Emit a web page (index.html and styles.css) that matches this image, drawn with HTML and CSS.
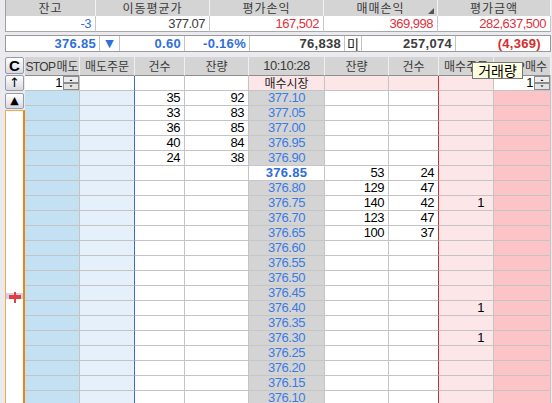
FILE: index.html
```html
<!DOCTYPE html>
<html lang="ko">
<head>
<meta charset="utf-8">
<link rel="stylesheet" href="styles.css">
</head>
<body>
<div class="app">
  <div class="summary">
    <div class="sh">잔고</div>
    <div class="sh">이동평균가</div>
    <div class="sh">평가손익</div>
    <div class="sh sort">매매손익</div>
    <div class="sh">평가금액</div>
    <div class="sv blue">-3</div>
    <div class="sv dark">377.07</div>
    <div class="sv red">167,502</div>
    <div class="sv red">369,998</div>
    <div class="sv red">282,637,500</div>
  </div>

  <div class="quote">
    <div class="q blue">376.85</div>
    <div class="q ctr blue tri">▼</div>
    <div class="q blue">0.60</div>
    <div class="q blue">-0.16%</div>
    <div class="q dark">76,838</div>
    <div class="q ctr kr">미</div>
    <div class="q dark">257,074</div>
    <div class="q red last">(4,369)</div>
  </div>

  <div class="board">
    <div class="side">
      <div class="btn btn-c">C</div>
      <div class="btn btn-up">↑</div>
      <div class="btn btn-tri">▲</div>
      <div class="track"><div class="mark"></div></div>
    </div>

    <div class="grid">
      <div class="r h">
        <span><span class="lat">STOP</span>매도</span><span>매도주문</span><span>건수</span><span>잔량</span><span class="time">10:10:28</span><span>잔량</span><span>건수</span><span>매수주문</span><span class="sbh"><span class="lat">STOP</span>매수</span>
      </div>
      <div class="r">
        <span class="w spin">1<svg class="spn" width="16" height="14" viewBox="0 0 16 14"><rect x="0.5" y="0.5" width="15" height="6" fill="#ececec" stroke="#8c8c8c"/><rect x="0.5" y="7.5" width="15" height="6" fill="#e2e2e2" stroke="#8c8c8c"/><path d="M6.5 5 L8 3.5 L9.5 5Z" fill="#000"/><path d="M6.5 9.5 L8 11 L9.5 9.5Z" fill="#000"/></svg></span><span class="w so-l"></span><span class="w"></span><span class="w"></span><span class="mk">매수시장</span><span class="pk"></span><span class="pk bc"></span><span class="pk"></span><span class="w spin">1<svg class="spn" width="16" height="14" viewBox="0 0 16 14"><rect x="0.5" y="0.5" width="15" height="6" fill="#ececec" stroke="#8c8c8c"/><rect x="0.5" y="7.5" width="15" height="6" fill="#e2e2e2" stroke="#8c8c8c"/><path d="M6.5 5 L8 3.5 L9.5 5Z" fill="#000"/><path d="M6.5 9.5 L8 11 L9.5 9.5Z" fill="#000"/></svg></span>
      </div>
      <div class="r"><span class="ss"></span><span class="so"></span><span class="w">35</span><span class="w">92</span><span class="p">377.10</span><span class="w"></span><span class="w bc"></span><span class="bo"></span><span class="sb"></span></div>
      <div class="r"><span class="ss"></span><span class="so"></span><span class="w">33</span><span class="w">83</span><span class="p">377.05</span><span class="w"></span><span class="w bc"></span><span class="bo"></span><span class="sb"></span></div>
      <div class="r"><span class="ss"></span><span class="so"></span><span class="w">36</span><span class="w">85</span><span class="p">377.00</span><span class="w"></span><span class="w bc"></span><span class="bo"></span><span class="sb"></span></div>
      <div class="r"><span class="ss"></span><span class="so"></span><span class="w">40</span><span class="w">84</span><span class="p">376.95</span><span class="w"></span><span class="w bc"></span><span class="bo"></span><span class="sb"></span></div>
      <div class="r"><span class="ss"></span><span class="so"></span><span class="w">24</span><span class="w">38</span><span class="p">376.90</span><span class="w"></span><span class="w bc"></span><span class="bo"></span><span class="sb"></span></div>
      <div class="r"><span class="ss"></span><span class="so"></span><span class="w"></span><span class="w"></span><span class="p cur">376.85</span><span class="w">53</span><span class="w bc">24</span><span class="bo"></span><span class="sb"></span></div>
      <div class="r"><span class="ss"></span><span class="so"></span><span class="w"></span><span class="w"></span><span class="p">376.80</span><span class="w">129</span><span class="w bc">47</span><span class="bo"></span><span class="sb"></span></div>
      <div class="r"><span class="ss"></span><span class="so"></span><span class="w"></span><span class="w"></span><span class="p">376.75</span><span class="w">140</span><span class="w bc">42</span><span class="bo">1</span><span class="sb"></span></div>
      <div class="r"><span class="ss"></span><span class="so"></span><span class="w"></span><span class="w"></span><span class="p">376.70</span><span class="w">123</span><span class="w bc">47</span><span class="bo"></span><span class="sb"></span></div>
      <div class="r"><span class="ss"></span><span class="so"></span><span class="w"></span><span class="w"></span><span class="p">376.65</span><span class="w">100</span><span class="w bc">37</span><span class="bo"></span><span class="sb"></span></div>
      <div class="r"><span class="ss"></span><span class="so"></span><span class="w"></span><span class="w"></span><span class="p">376.60</span><span class="w"></span><span class="w bc"></span><span class="bo"></span><span class="sb"></span></div>
      <div class="r"><span class="ss"></span><span class="so"></span><span class="w"></span><span class="w"></span><span class="p">376.55</span><span class="w"></span><span class="w bc"></span><span class="bo"></span><span class="sb"></span></div>
      <div class="r"><span class="ss"></span><span class="so"></span><span class="w"></span><span class="w"></span><span class="p">376.50</span><span class="w"></span><span class="w bc"></span><span class="bo"></span><span class="sb"></span></div>
      <div class="r"><span class="ss"></span><span class="so"></span><span class="w"></span><span class="w"></span><span class="p">376.45</span><span class="w"></span><span class="w bc"></span><span class="bo"></span><span class="sb"></span></div>
      <div class="r"><span class="ss"></span><span class="so"></span><span class="w"></span><span class="w"></span><span class="p">376.40</span><span class="w"></span><span class="w bc"></span><span class="bo">1</span><span class="sb"></span></div>
      <div class="r"><span class="ss"></span><span class="so"></span><span class="w"></span><span class="w"></span><span class="p">376.35</span><span class="w"></span><span class="w bc"></span><span class="bo"></span><span class="sb"></span></div>
      <div class="r"><span class="ss"></span><span class="so"></span><span class="w"></span><span class="w"></span><span class="p">376.30</span><span class="w"></span><span class="w bc"></span><span class="bo">1</span><span class="sb"></span></div>
      <div class="r"><span class="ss"></span><span class="so"></span><span class="w"></span><span class="w"></span><span class="p">376.25</span><span class="w"></span><span class="w bc"></span><span class="bo"></span><span class="sb"></span></div>
      <div class="r"><span class="ss"></span><span class="so"></span><span class="w"></span><span class="w"></span><span class="p">376.20</span><span class="w"></span><span class="w bc"></span><span class="bo"></span><span class="sb"></span></div>
      <div class="r"><span class="ss"></span><span class="so"></span><span class="w"></span><span class="w"></span><span class="p">376.15</span><span class="w"></span><span class="w bc"></span><span class="bo"></span><span class="sb"></span></div>
      <div class="r"><span class="ss"></span><span class="so"></span><span class="w"></span><span class="w"></span><span class="p">376.10</span><span class="w"></span><span class="w bc"></span><span class="bo"></span><span class="sb"></span></div>
    </div>
  </div>

  <div class="tooltip">거래량</div>
</div>
</body>
</html>
```

FILE: styles.css
```css
* { box-sizing: border-box; }
html, body { margin: 0; padding: 0; }
body {
  width: 552px;
  height: 403px;
  overflow: hidden;
  background: #ebebef;
  font-family: "Liberation Sans", "Noto Sans CJK KR", sans-serif;
  font-size: 13px;
  letter-spacing: -0.5px;
  color: #000;
}
.app {
  position: relative;
  width: 552px;
  height: 403px;
  padding-left: 5px;
}

/* summary table */
.summary {
  display: grid;
  grid-template-columns: 91px 114px 114px 114px 113px;
  width: 546px;
}
.sh {
  height: 16px;
  background: #d4d4d4;
  border-right: 1px solid #f2f2f2;
  color: #3a3a3a;
  text-align: center;
  line-height: 16px;
  font-family: "Noto Sans CJK KR", sans-serif;
  font-size: 12px;
  letter-spacing: 1px;
}
.sh:first-child { border-left: 1px solid #a0a0a0; }
.sort { position: relative; }
.sort::after {
  content: "";
  position: absolute;
  right: 3px;
  bottom: 2px;
  width: 0;
  height: 0;
  border-left: 6px solid transparent;
  border-bottom: 6px solid #555;
}
.sv {
  height: 16px;
  background: #fff;
  border-right: 1px solid #c8c8c8;
  border-bottom: 1px solid #a8a8a8;
  text-align: right;
  padding-right: 4px;
  line-height: 15px;
}
.sv:nth-child(6) { border-left: 1px solid #a0a0a0; }
.blue { color: #2f6fdc; }
.red { color: #e0303c; }
.dark { color: #3c3c3c; }

/* quote bar */
.quote {
  margin-top: 3px;
  width: 546px;
  height: 17px;
  display: grid;
  grid-template-columns: 94px 20px 65px 65px 95px 17px 94px 94px;
  background: #fff;
  border: 1px solid #9a9a9a;
}
.q {
  border-right: 1px solid #c4c4c4;
  text-align: right;
  padding-right: 3px;
  line-height: 15px;
  font-weight: bold;
  font-size: 13px;
  letter-spacing: 0.3px;
  white-space: nowrap;
}
.q.ctr { text-align: center; padding: 0; letter-spacing: 0; }
.q.tri { font-size: 11px; font-family: "DejaVu Sans", sans-serif; }
.q.kr { font-weight: normal; font-family: "Noto Sans CJK KR", sans-serif; font-size: 13px; color: #222; }
.q.last { border-right: none; padding-right: 9px; color: #d62c2c; }

/* board */
.board {
  margin-top: 5px;
  display: flex;
  height: 346px;
}
.side {
  width: 20px;
  display: flex;
  flex-direction: column;
}
.btn {
  width: 19px;
  border: 1px solid #9898a6;
  border-radius: 2px;
  background: linear-gradient(#ffffff, #d8d8e2);
  text-align: center;
  color: #000;
  letter-spacing: 0;
}
.btn-c {
  height: 17px;
  margin-bottom: 1px;
  font-weight: bold;
  font-size: 15px;
  line-height: 15px;
}
.btn-up {
  height: 16px;
  margin-bottom: 2px;
  font-size: 13px;
  line-height: 14px;
  font-family: "DejaVu Sans", sans-serif;
}
.btn-tri {
  height: 16px;
  margin-bottom: 1px;
  font-size: 11px;
  line-height: 14px;
  font-family: "DejaVu Sans", sans-serif;
}
.track {
  position: relative;
  flex: 1;
  background: #fff;
  border-top: 1px solid #f0a848;
  border-left: 1px solid #f0a848;
  border-right: 2px solid #e98512;
}
.mark {
  position: absolute;
  left: 0;
  right: 0;
  top: 182px;
  height: 6px;
  background: #d2d2ea;
}
.mark::before {
  content: "";
  position: absolute;
  left: 3px;
  top: 2px;
  width: 12px;
  height: 4px;
  background: #e04040;
}
.mark::after {
  content: "";
  position: absolute;
  left: 8px;
  top: -1px;
  width: 2px;
  height: 11px;
  background: #e04040;
}

/* order grid */
.grid { width: 526px; }
.r {
  display: grid;
  grid-template-columns: 55px 55px 50px 64px 76px 64px 50px 55px 57px;
  height: 15px;
}
.r > span {
  display: block;
  border-right: 1px solid #c4c4c4;
  border-bottom: 1px solid #c4c4c4;
  text-align: right;
  padding-right: 4px;
  line-height: 14px;
  white-space: nowrap;
  overflow: hidden;
}
.r.h { height: 19px; }
.r.h > span {
  background: #d4d4d4;
  border-right: 1px solid #efefef;
  border-bottom: 1px solid #8e8e8e;
  color: #3a3a3a;
  text-align: center;
  padding: 0;
  line-height: 18px;
  font-family: "Noto Sans CJK KR", sans-serif;
  font-size: 12px;
  letter-spacing: 0;
}
.r.h > span.time {
  font-family: "Liberation Sans", sans-serif;
  font-size: 13px;
  letter-spacing: -0.5px;
}
.r.h > span.sbh {
  text-align: right;
  padding-right: 5px;
}
.lat {
  font-family: "Liberation Sans", sans-serif;
  font-size: 12px;
  letter-spacing: -0.6px;
  margin-right: 1px;
}
.w { background: #fff; }
.ss { background: #c3e1f3; }
.so { background: #e5f0fb; }
.so, .so-l { border-right-color: #3a6fd2 !important; }
.p {
  background: #d4d4d4;
  color: #3a7be2;
  text-align: center !important;
  padding: 0 !important;
  border-bottom-color: #c6c6c6 !important;
}
.p.cur { background: #fff; font-weight: bold; color: #2c6cdc; letter-spacing: 0.3px; }
.bc { border-right-color: #c83434 !important; }
.bo { background: #fce6e8; padding-right: 9px !important; }
.sb { background: #fcc4c6; }
.pk { background: #fde6e8; }
.mk {
  background: #fde6e8;
  text-align: center !important;
  padding: 0 !important;
  font-family: "Noto Sans CJK KR", sans-serif;
  font-size: 12px;
  letter-spacing: 0;
  color: #222;
}
.spin {
  display: flex !important;
  justify-content: flex-end;
  align-items: flex-start;
  padding-right: 0 !important;
}
.spn { display: block; margin-left: 1px; }

.tooltip {
  position: absolute;
  left: 472px;
  top: 62px;
  width: 51px;
  height: 17px;
  background: #ffffe1;
  border: 1px solid #767676;
  text-align: center;
  line-height: 15px;
  font-family: "Noto Sans CJK KR", sans-serif;
  font-size: 14px;
  letter-spacing: 0;
  color: #000;
}
```
